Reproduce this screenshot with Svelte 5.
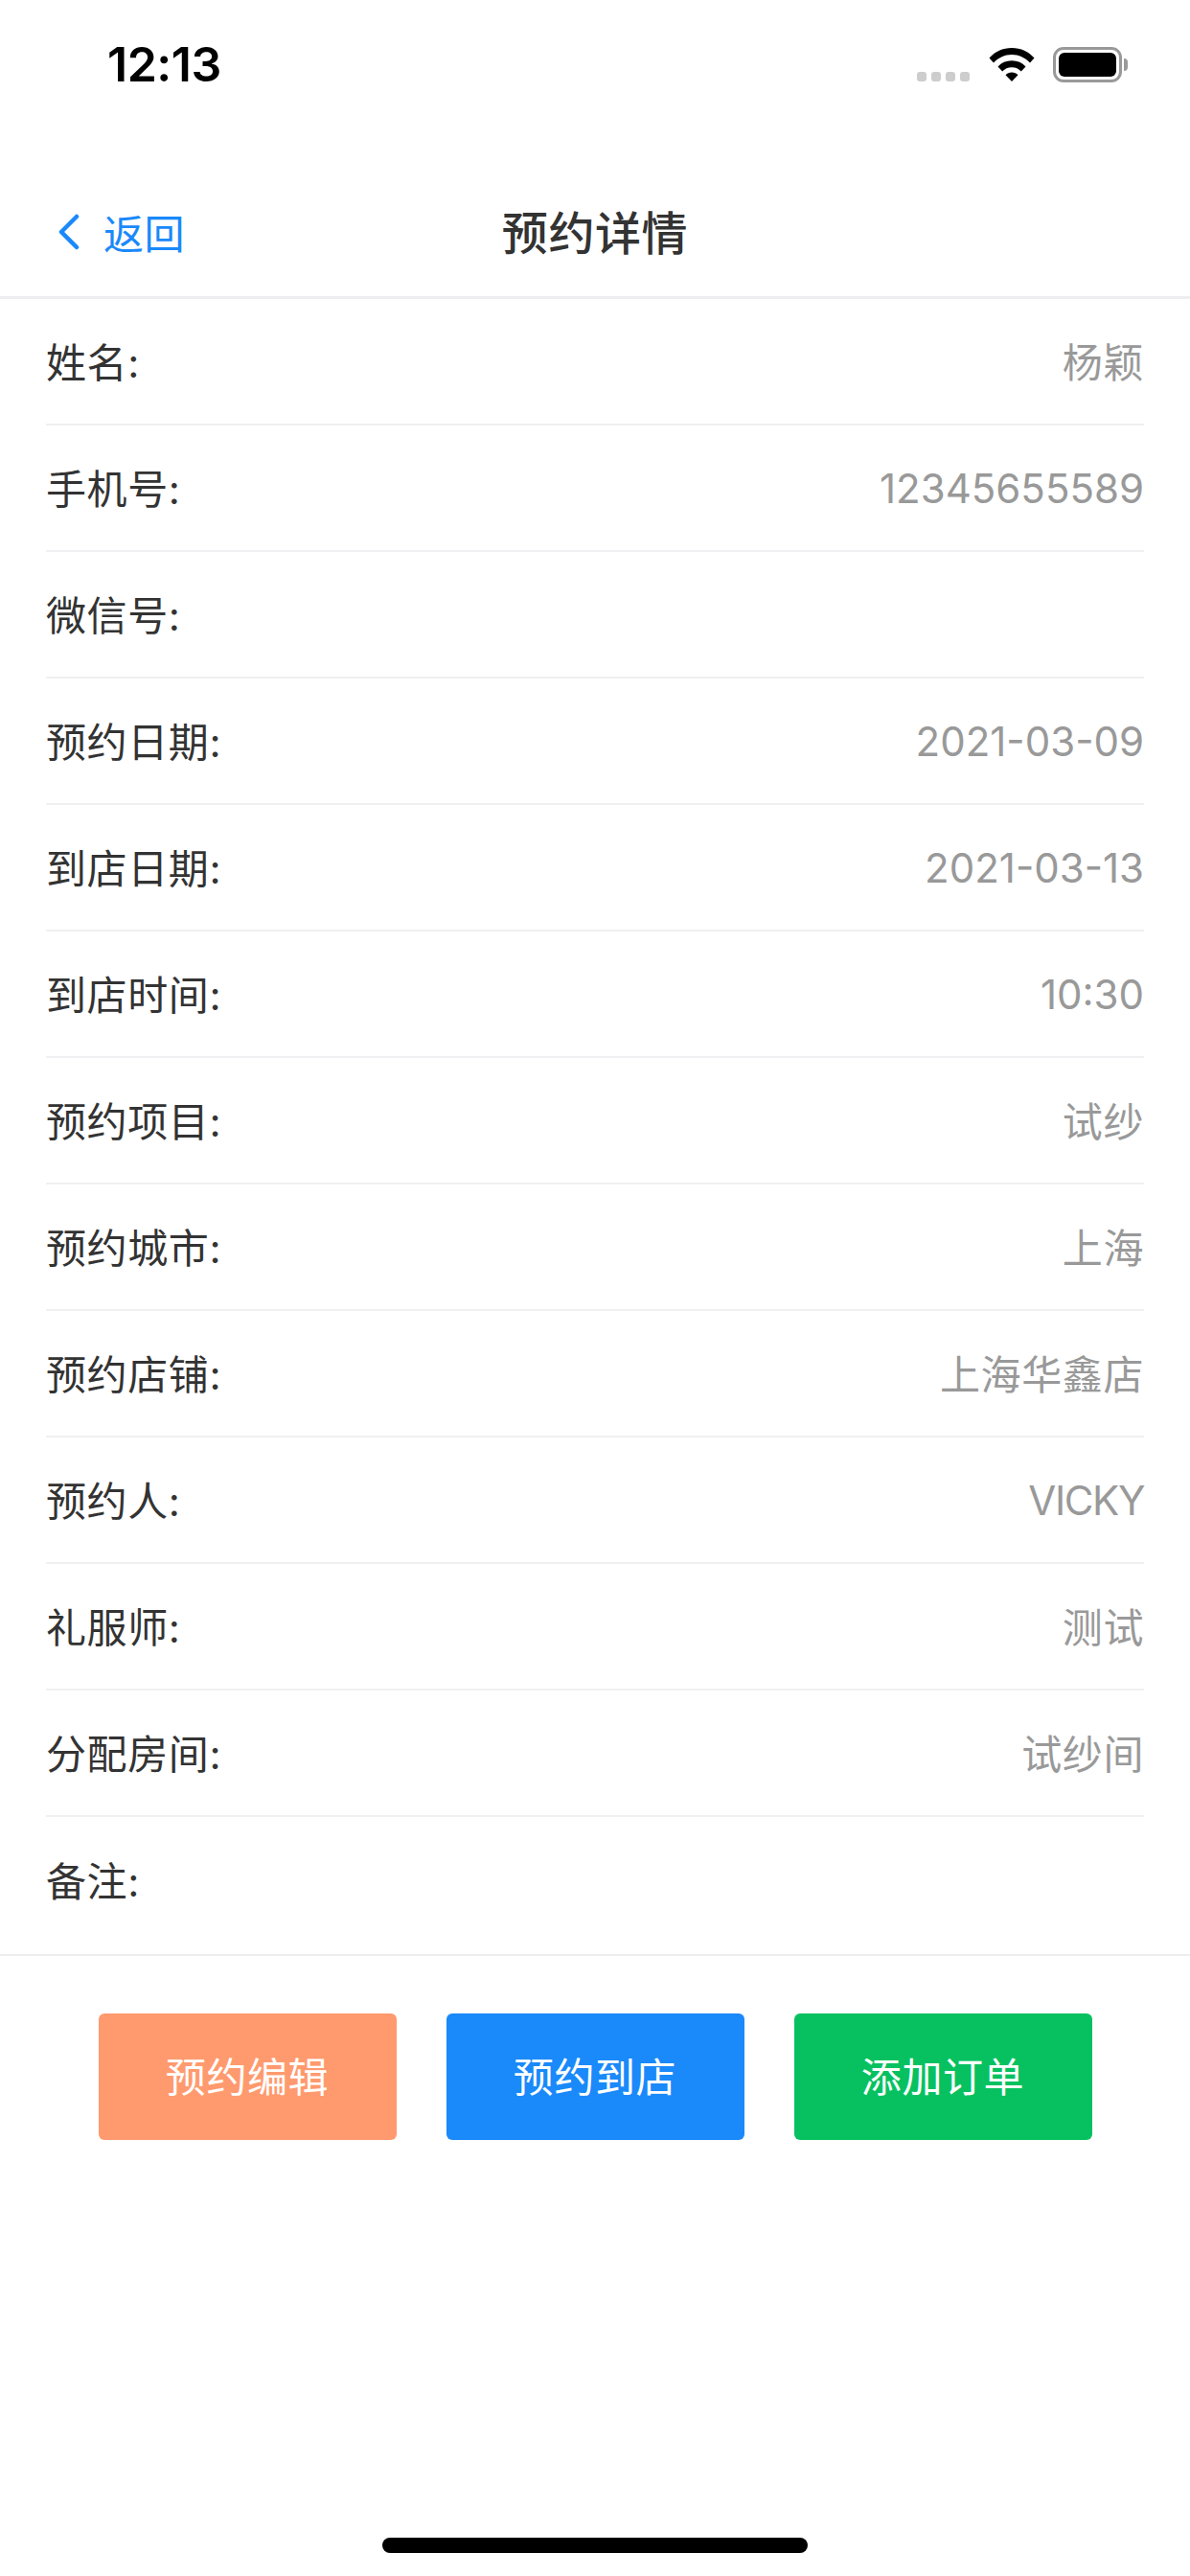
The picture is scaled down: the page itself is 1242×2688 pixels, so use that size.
<script>
	const rows = [
		{ label: '姓名:', value: '杨颖' },
		{ label: '手机号:', value: '12345655589' },
		{ label: '微信号:', value: '' },
		{ label: '预约日期:', value: '2021-03-09' },
		{ label: '到店日期:', value: '2021-03-13' },
		{ label: '到店时间:', value: '10:30' },
		{ label: '预约项目:', value: '试纱' },
		{ label: '预约城市:', value: '上海' },
		{ label: '预约店铺:', value: '上海华鑫店' },
		{ label: '预约人:', value: 'VICKY' },
		{ label: '礼服师:', value: '测试' },
		{ label: '分配房间:', value: '试纱间' },
		{ label: '备注:', value: '' }
	];

	const actions = [
		{ text: '预约编辑', kind: 'orange' },
		{ text: '预约到店', kind: 'blue' },
		{ text: '添加订单', kind: 'green' }
	];

	// chinese values sit a bit wider and higher than the digits
	function valueClass(value) {
		if (/[\u4e00-\u9fff]/.test(value)) return 'value cjk';
		if (/^[A-Z]+$/.test(value)) return 'value tight';
		return 'value';
	}
</script>

<div class="page">
	<div class="status-bar">
		<span class="time">12:13</span>
		<div class="status-icons">
			<div class="signal">
				<i></i><i></i><i></i><i></i>
			</div>
			<svg class="wifi" width="48" height="36" viewBox="0 0 48 36">
				<path d="M0.5 11.5C6.5 5 14.5 1 24 1s17.500 4 23.500 10.500l-4.500 5C37.500 11 31.500 8 24 8S10.500 11 5 16.500z" fill="#000" />
				<path d="M9.500 20.500C13.200 16.500 18 14.300 24 14.300s10.800 2.200 14.500 6.200l-4.700 5C31.200 22.600 28 21.200 24 21.200s-7.200 1.400-9.800 4.300z" fill="#000" />
				<path d="M17.500 29.300C19.200 27.500 21.300 26.600 24 26.600s4.800 .9 6.500 2.700L24 36z" fill="#000" />
			</svg>
			<div class="battery">
				<div class="battery-body"><div class="battery-fill"></div></div>
				<div class="battery-cap"></div>
			</div>
		</div>
	</div>

	<header class="nav">
		<div class="back">
			<svg width="24" height="38" viewBox="0 0 24 38">
				<path d="M20 3L4 19l16 16" fill="none" stroke="#1a89fa" stroke-width="4.500" stroke-linecap="round" stroke-linejoin="round" />
			</svg>
			<span>返回</span>
		</div>
		<h1>预约详情</h1>
	</header>

	<div class="list">
		{#each rows as row}
			<div class="row">
				<span class="label">{row.label}</span>
				<span class={valueClass(row.value)}>{row.value}</span>
			</div>
		{/each}
	</div>

	<div class="actions">
		{#each actions as action}
			<button type="button" class={action.kind}>{action.text}</button>
		{/each}
	</div>

	<div class="home-bar"></div>
</div>

<style>
	:global(body) {
		margin: 0;
		background: #fff;
	}

	.page {
		position: relative;
		width: 1242px;
		height: 2688px;
		background: #fff;
		overflow: hidden;
		font-family: Inter, 'Noto Sans CJK SC', sans-serif;
	}

	.status-bar {
		height: 132px;
		display: flex;
		justify-content: space-between;
		align-items: center;
		padding: 2px 65px 0 112px;
		box-sizing: border-box;
	}

	.time {
		font-size: 50px;
		font-weight: 600;
		color: #000;
		letter-spacing: -0.5px;
	}

	.status-icons {
		display: flex;
		align-items: center;
	}

	.signal {
		display: flex;
		gap: 5px;
		margin-top: 26px;
		margin-right: 20px;
	}

	.signal i {
		width: 10px;
		height: 10px;
		border-radius: 3px;
		background: #cdcdcd;
	}

	.wifi {
		margin-right: 19px;
	}

	.battery {
		display: flex;
		align-items: center;
	}

	.battery-body {
		width: 72px;
		height: 37px;
		border: 3px solid #999;
		border-radius: 11px;
		padding: 3px;
		box-sizing: border-box;
	}

	.battery-fill {
		width: 100%;
		height: 100%;
		background: #000;
		border-radius: 6px;
	}

	.battery-cap {
		width: 4px;
		height: 13px;
		margin-left: 2px;
		background: #999;
		border-radius: 0 4px 4px 0;
	}

	.nav {
		position: relative;
		height: 180px;
		padding-top: 42px;
		display: flex;
		align-items: center;
		justify-content: center;
		border-bottom: 3px solid #eeeef0;
		box-sizing: border-box;
	}

	.back {
		position: absolute;
		left: 60px;
		top: 42px;
		bottom: 0;
		display: flex;
		align-items: center;
		gap: 24px;
		color: #1a89fa;
		font-size: 42px;
		letter-spacing: 0.6px;
	}

	h1 {
		margin: 0;
		padding-bottom: 3px;
		font-size: 48px;
		font-weight: 500;
		color: #333;
		letter-spacing: 0.6px;
	}

	.list {
		padding: 0 48px;
		border-bottom: 2px solid #eeeef0;
	}

	.row {
		height: 132px;
		display: flex;
		align-items: center;
		justify-content: space-between;
		border-bottom: 2px solid #f0f0f2;
		box-sizing: border-box;
		font-size: 42px;
	}

	.row:last-child {
		height: 143px;
		border-bottom: none;
		padding-bottom: 11px;
	}

	.label {
		color: #333;
		letter-spacing: 0.6px;
		padding-bottom: 3px;
	}

	.value {
		color: #999;
		padding-top: 1px;
	}

	.value.cjk {
		letter-spacing: 0.6px;
		padding-top: 0;
		padding-bottom: 3px;
	}

	.value.tight {
		letter-spacing: -1.400px;
	}

	.actions {
		display: flex;
		justify-content: center;
		gap: 52px;
		margin-top: 60px;
	}

	button {
		width: 311px;
		height: 132px;
		border: none;
		border-radius: 6px;
		color: #fff;
		font-family: inherit;
		font-size: 42px;
		letter-spacing: 0.6px;
		padding: 0 0 5px;
	}

	.orange {
		background: #ff9a6e;
	}

	.blue {
		background: #1a89fa;
	}

	.green {
		background: #07c160;
	}

	.home-bar {
		position: absolute;
		left: 399px;
		bottom: 24px;
		width: 444px;
		height: 16px;
		border-radius: 8px;
		background: #000;
	}
</style>
